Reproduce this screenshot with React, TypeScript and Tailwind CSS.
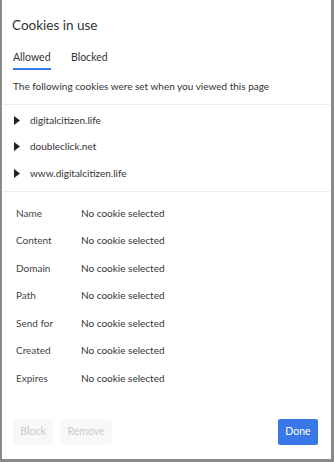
import React from "react";

const rows = ["Name", "Content", "Domain", "Path", "Send for", "Created", "Expires"];
const sites = ["digitalcitizen.life", "doubleclick.net", "www.digitalcitizen.life"];

function Tri() {
  return (
    <svg width="6" height="9" viewBox="0 0 6 9" className="shrink-0">
      <path d="M0 0 L6 4.5 L0 9 Z" fill="#222" />
    </svg>
  );
}

export default function App() {
  return (
    <div
      className="w-[334px] h-[462px] bg-[#8a8a8a] overflow-hidden relative"
      style={{ fontFamily: 'Lato, "Open Sans", sans-serif' }}
    >
      <div className="absolute left-[2px] top-0 w-[329px] h-[459px] bg-white flex flex-col text-[#333]">
        <div className="pl-[10px] pt-[15px] text-[13.5px] leading-[20px] text-[#333]">Cookies in use</div>
        <div className="flex pl-[11px] mt-[15px] text-[10.5px] gap-[20px]">
          <div className="flex flex-col">
            <span className="leading-[14px] text-[#333]">Allowed</span>
            <div className="h-[2px] bg-[#3b78e7] mt-[4px] w-[38px]"></div>
          </div>
          <span className="leading-[14px] text-[#333]">Blocked</span>
        </div>
        <div className="pl-[11px] mt-[9px] text-[10px] leading-[14px]">
          The following cookies were set when you viewed this page
        </div>
        <div className="mt-[11px] mx-[1px] h-px bg-[#ececec]"></div>
        <div className="flex flex-col pt-[2px] pb-[4px]">
          {sites.map((s) => (
            <div key={s} className="flex items-center h-[26.5px] pl-[12px] gap-[10px] text-[10px]">
              <Tri />
              <span>{s}</span>
            </div>
          ))}
        </div>
        <div className="mx-[1px] h-px bg-[#ececec]"></div>
        <div className="flex flex-col pt-[8px]">
          {rows.map((r) => (
            <div key={r} className="flex items-center h-[27.5px] text-[10px]">
              <span className="w-[79px] pl-[14px] text-[#444]">{r}</span>
              <span className="text-[#333]">No cookie selected</span>
            </div>
          ))}
        </div>
        <div className="mt-auto mb-[14px] flex items-center px-[11px]">
          <div className="h-[26px] w-[40px] bg-[#f8f8f8] text-[#c8c8c8] text-[10.5px] flex items-center justify-center rounded-[2px]">Block</div>
          <div className="h-[26px] w-[52px] ml-[7px] bg-[#f8f8f8] text-[#c8c8c8] text-[10.5px] flex items-center justify-center rounded-[2px]">Remove</div>
          <div className="ml-auto mr-[2px] h-[26px] w-[40px] bg-[#3b78e7] text-white text-[10.5px] flex items-center justify-center rounded-[2px]">Done</div>
        </div>
      </div>
    </div>
  );
}
